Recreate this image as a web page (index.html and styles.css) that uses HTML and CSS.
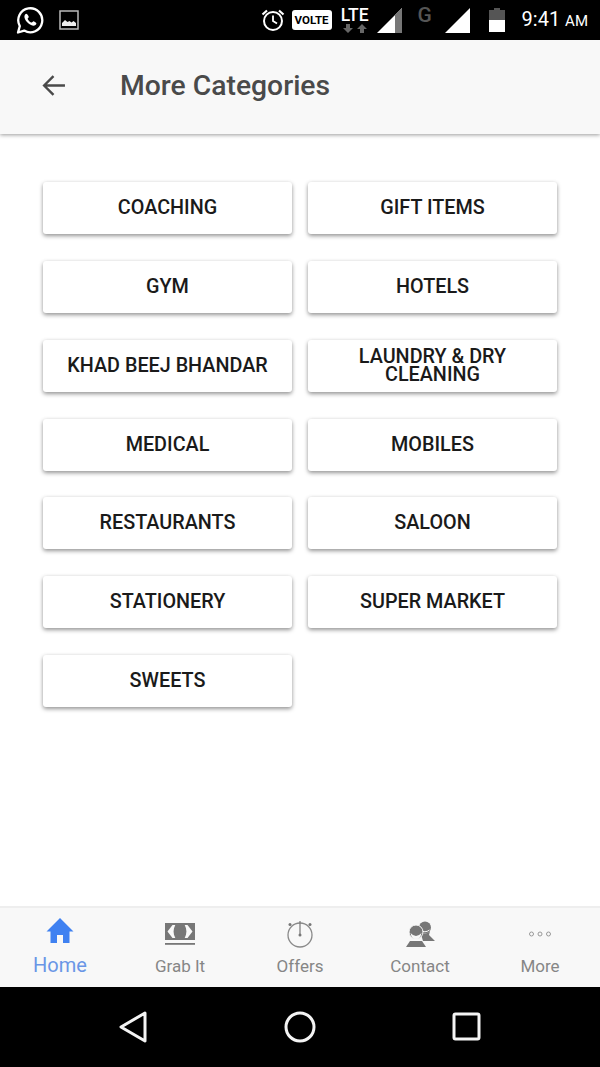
FILE: index.html
```html
<!DOCTYPE html>
<html lang="en">
<head>
<meta charset="utf-8">
<title>More Categories</title>
<link rel="stylesheet" href="styles.css">
</head>
<body>
<div class="phone">
  <div class="status">
    <div class="status-left">
      <svg class="ic-wa" viewBox="0 0 28 28"><path d="M2 26.500l1.800-6.400A12 12 0 1 1 8.200 24.600z" fill="none" stroke="#fff" stroke-width="2.300" stroke-linejoin="round"/><path d="M10.300 7.800c-.7 0-1.900.9-1.900 3 0 3.400 4.600 8.600 8.800 8.900 1.800.1 3.200-1.300 3.200-2.500 0-.5-2.600-1.900-3-1.900-.5 0-1.100 1.300-1.700 1.300-1.200 0-4-2.700-4-3.900 0-.6 1.100-1 1.100-1.600 0-.4-1.300-3.300-2.500-3.300z" fill="#fff"/></svg>
      <svg class="ic-img" viewBox="0 0 20 20"><rect x="1" y="1" width="18" height="18" fill="#000" stroke="#bbb" stroke-width="1.500"/><path d="M3 16v-3l3-3 2.500 2 2-1 2 1.500 2-1.500 2.500 2v3z" fill="#eee"/></svg>
    </div>
    <div class="status-right">
      <svg class="ic-alarm" viewBox="0 0 24 24"><circle cx="12" cy="13" r="9" fill="none" stroke="#fff" stroke-width="2"/><path d="M12 7.500V13l4 2.500" fill="none" stroke="#fff" stroke-width="1.800"/><path d="M1.500 6.500L6 2.500M22.500 6.500L18 2.500" stroke="#fff" stroke-width="2.200"/></svg>
      <span class="volte">VOLTE</span>
      <div class="lte"><span class="lte-text">LTE</span>
        <svg class="ic-arrows" viewBox="0 0 24 9"><path d="M3 9V5H0l5-5 5 5H7v4z" transform="rotate(180 5 4.500)" fill="#666"/><path d="M17 9V5h-3l5-5 5 5h-3v4z" fill="#666"/></svg>
      </div>
      <svg class="ic-signal" viewBox="0 0 25 25"><path d="M0 25L25 0v25z" fill="#fff"/><path d="M18 7L25 0v25h-7z" fill="#777"/></svg>
      <span class="g">G</span>
      <svg class="ic-signal2" viewBox="0 0 25 25"><path d="M0 25L25 0v25z" fill="#fff"/></svg>
      <svg class="ic-batt" viewBox="0 0 16 24"><path d="M5 0h6v2h5v22H0V2h5z" fill="#555"/><path d="M0 12h16v12H0z" fill="#fff"/></svg>
      <span class="time">9:41 <small class="ampm">AM</small></span>
    </div>
  </div>
  <header class="appbar">
    <svg class="ic-back" viewBox="0 0 24 24"><path d="M23 12H3M12 3l-9 9 9 9" fill="none" stroke="#4a4a4a" stroke-width="2.300"/></svg>
    <h1 class="title">More Categories</h1>
  </header>
  <main class="content">
    <div class="grid">
      <button class="cat">COACHING</button>
      <button class="cat">GIFT ITEMS</button>
      <button class="cat">GYM</button>
      <button class="cat">HOTELS</button>
      <button class="cat">KHAD BEEJ BHANDAR</button>
      <button class="cat cat-wrap">LAUNDRY &amp; DRY CLEANING</button>
      <button class="cat">MEDICAL</button>
      <button class="cat">MOBILES</button>
      <button class="cat">RESTAURANTS</button>
      <button class="cat">SALOON</button>
      <button class="cat">STATIONERY</button>
      <button class="cat">SUPER MARKET</button>
      <button class="cat">SWEETS</button>
    </div>
  </main>
  <nav class="tabs">
    <div class="tab tab-active">
      <svg class="tab-ic" viewBox="0 0 30 30"><path d="M15 3L1.500 16.500h4V28h6.500v-8h6v8h6.500V16.500h4z" fill="#3f81f1"/></svg>
      <span class="tab-label">Home</span>
    </div>
    <div class="tab">
      <svg class="tab-ic" viewBox="0 0 30 30"><path d="M0 4h30v17H0z" fill="#777"/><path d="M7.500 6L2.500 12.500l5 6.500h2.800c-2.300-4-2.300-9 0-13zM22.500 6l5 6.500-5 6.500h-2.800c2.300-4 2.300-9 0-13z" fill="#f8f8f8"/><path d="M0 24h30v1.800H0z" fill="#777"/></svg>
      <span class="tab-label">Grab It</span>
    </div>
    <div class="tab">
      <svg class="tab-ic" viewBox="0 0 30 30"><circle cx="15" cy="16" r="12" fill="none" stroke="#8a8a8a" stroke-width="1.300"/><path d="M15 2v14" stroke="#777" stroke-width="1.200"/><circle cx="15" cy="16" r="1.500" fill="#777"/><circle cx="5" cy="5.500" r="1.500" fill="#777"/><circle cx="25" cy="5.500" r="1.500" fill="#777"/></svg>
      <span class="tab-label">Offers</span>
    </div>
    <div class="tab">
      <svg class="tab-ic" viewBox="0 0 30 30"><circle cx="20" cy="8.500" r="6" fill="#777"/><path d="M15 12q5 5 10 0l-1 4 6 6H18z" fill="#777"/><path d="M15 11q5 3.500 9.500 0" fill="none" stroke="#f8f8f8"/><circle cx="11" cy="13" r="7" fill="#777" stroke="#f8f8f8"/><path d="M5.500 14q5.500 6 11 0-1 6-5.500 6t-5.500-6z" fill="#f8f8f8"/><path d="M1 28l4-6h12l4 6z" fill="#777"/></svg>
      <span class="tab-label">Contact</span>
    </div>
    <div class="tab">
      <svg class="tab-ic" viewBox="0 0 30 30"><g fill="none" stroke="#999" stroke-width="1"><circle cx="6.500" cy="15" r="2"/><circle cx="15" cy="15" r="2"/><circle cx="23.500" cy="15" r="2"/></g></svg>
      <span class="tab-label">More</span>
    </div>
  </nav>
  <div class="sysnav">
    <svg class="nav-back" viewBox="0 0 30 34"><path d="M27 3L3 17l24 14z" fill="none" stroke="#f4f4f4" stroke-width="3" stroke-linejoin="round"/></svg>
    <svg class="nav-home" viewBox="0 0 34 34"><circle cx="17" cy="17" r="14" fill="none" stroke="#f4f4f4" stroke-width="3"/></svg>
    <svg class="nav-recent" viewBox="0 0 30 30"><rect x="2" y="2" width="25" height="25" rx="1.500" fill="none" stroke="#f4f4f4" stroke-width="3"/></svg>
  </div>
</div>
</body>
</html>
```
FILE: styles.css
```css
* { box-sizing: border-box; }
html, body { margin: 0; padding: 0; background: #fff; }
.phone {
  width: 600px;
  height: 1067px;
  display: flex;
  flex-direction: column;
  overflow: hidden;
  font-family: Roboto, "Liberation Sans", sans-serif;
}
.status {
  height: 40px;
  flex: none;
  background: #000;
  color: #fff;
  display: flex;
  align-items: center;
  justify-content: space-between;
  padding: 0 12px 0 16px;
}
.status-left { display: flex; align-items: center; gap: 15px; }
.ic-wa { width: 28px; height: 28px; }
.ic-img { width: 20px; height: 20px; }
.status-right { display: flex; align-items: center; }
.ic-alarm { width: 24px; height: 24px; margin-right: 7px; }
.volte {
  background: #fff;
  color: #000;
  font-size: 11.5px;
  font-weight: 700;
  border-radius: 3px;
  width: 40px;
  height: 20px;
  line-height: 20px;
  text-align: center;
  margin-right: 8px;
}
.lte { display: flex; flex-direction: column; align-items: center; width: 30px; margin-right: 7px; }
.lte-text { font-size: 17.5px; font-weight: 500; line-height: 17px; }
.ic-arrows { width: 24px; height: 9px; }
.ic-signal { width: 25px; height: 25px; margin-right: 16px; }
.g { font-size: 21px; font-weight: 500; color: #555; width: 20px; margin-top: -11px; margin-right: 7px; }
.ic-signal2 { width: 25px; height: 25px; margin-right: 19px; }
.ic-batt { width: 16px; height: 24px; margin-right: 17px; }
.time { font-size: 20px; line-height: 24px; white-space: nowrap; }
.ampm { font-size: 15px; }
.appbar {
  height: 94px;
  flex: none;
  background: #f8f8f8;
  box-shadow: 0 1px 4px rgba(0, 0, 0, 0.4);
  display: flex;
  align-items: center;
  padding: 0 0 4px 41px;
  position: relative;
}
.ic-back { width: 25px; height: 25px; margin-right: 54px; }
.title { margin: 0; font-size: 28.3px; font-weight: 500; color: #4a4a4a; }
.content { flex: 1 1 auto; padding: 48px 43px 0; background: #fff; }
.grid {
  display: grid;
  grid-template-columns: 249px 249px;
  grid-auto-rows: 52px;
  column-gap: 16px;
  row-gap: 26.850px;
}
.cat {
  border: 0;
  background: #fff;
  border-radius: 3px;
  box-shadow: 0 2px 4px rgba(0, 0, 0, 0.4), 0 0 4px rgba(0, 0, 0, 0.05);
  font-family: inherit;
  font-size: 19.8px;
  font-weight: 500;
  color: #1a1a1a;
  line-height: 18px;
  padding: 0 20px;
  text-align: center;
}
.cat-wrap { padding: 0 36px; }
.tabs {
  height: 81px;
  flex: none;
  background: #f8f8f8;
  border-top: 2px solid #eee;
  display: flex;
}
.tab {
  flex: 1;
  display: flex;
  flex-direction: column;
  align-items: center;
  padding-top: 11px;
  color: #868686;
}
.tab-ic { width: 30px; height: 30px; }
.tab-label { font-size: 17px; line-height: 20px; margin-top: 7px; }
.tab-active { color: #6a96e6; padding-top: 7px; }
.tab-active .tab-label { font-size: 20px; margin-top: 10px; }
.sysnav {
  height: 80px;
  flex: none;
  background: #000;
  display: flex;
  align-items: center;
  justify-content: space-between;
  padding: 0 118px;
}
.nav-back { width: 30px; height: 34px; }
.nav-home { width: 34px; height: 34px; }
.nav-recent { width: 30px; height: 30px; }
```
